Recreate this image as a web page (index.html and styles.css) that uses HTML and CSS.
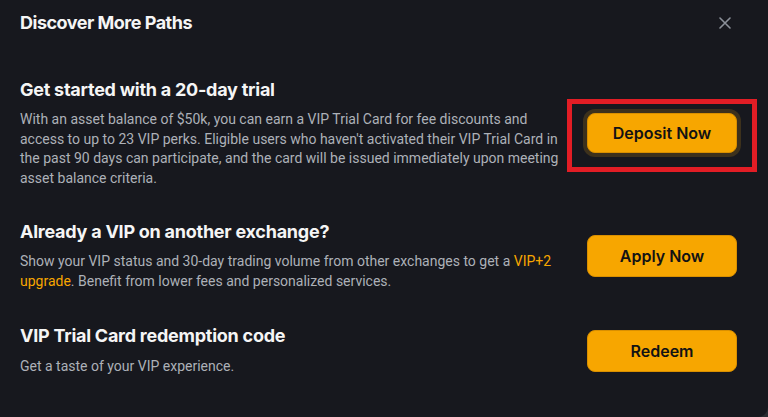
FILE: index.html
```html
<!DOCTYPE html>
<html lang="en">
<head>
<meta charset="utf-8">
<title>Discover More Paths</title>
<link rel="stylesheet" href="styles.css">
</head>
<body>
<div class="dialog">
  <header class="head">
    <h1 class="head-title">Discover More Paths</h1>
    <button class="close" aria-label="Close">
      <svg width="12" height="12" viewBox="0 0 12 12"><path d="M1 1L11 11M11 1L1 11" stroke="#8b9099" stroke-width="1.6" stroke-linecap="round"/></svg>
    </button>
  </header>
  <div class="rows">
    <section class="row">
      <div class="text">
        <h2 class="row-title">Get started with a 20-day trial</h2>
        <p class="row-desc">With an asset balance of $50k, you can earn a VIP Trial Card for fee discounts and access to up to 23 VIP perks. Eligible users who haven't activated their VIP Trial Card in the past 90 days can participate, and the card will be issued immediately upon meeting asset balance criteria.</p>
      </div>
      <div class="action">
        <button class="btn btn-focus">Deposit Now</button>
        <span class="mark"></span>
      </div>
    </section>
    <section class="row">
      <div class="text">
        <h2 class="row-title">Already a VIP on another exchange?</h2>
        <p class="row-desc">Show your VIP status and 30-day trading volume from other exchanges to get a <span class="link">VIP+2</span> <span class="link">upgrade</span>. Benefit from lower fees and personalized services.</p>
      </div>
      <div class="action">
        <button class="btn">Apply Now</button>
      </div>
    </section>
    <section class="row row-last">
      <div class="text">
        <h2 class="row-title">VIP Trial Card redemption code</h2>
        <p class="row-desc">Get a taste of your VIP experience.</p>
      </div>
      <div class="action">
        <button class="btn">Redeem</button>
      </div>
    </section>
  </div>
</div>
</body>
</html>
```

FILE: styles.css
```css
* { box-sizing: border-box; }
html, body { margin: 0; padding: 0; height: 100%; }
body {
  background: #2a2c31;
  font-family: "Roboto", "Liberation Sans", sans-serif;
  color: #adb1b8;
}
.dialog {
  width: 768px;
  height: 417px;
  background: #17181e;
  border-bottom-right-radius: 10px;
  padding: 0 31px 0 20px;
}
.head {
  display: flex;
  align-items: center;
  justify-content: space-between;
  height: 45px;
}
.head-title {
  margin: 0;
  font-family: "Inter", "Roboto", sans-serif;
  font-size: 18px;
  font-weight: 700;
  color: #f5f5f5;
  letter-spacing: -0.5px;
}
.close {
  background: none;
  border: 0;
  padding: 0;
  width: 12px;
  height: 12px;
  margin-right: 6px;
  display: flex;
}
.rows {
  display: flex;
  flex-direction: column;
  gap: 31px;
  padding-top: 33px;
}
.row {
  display: flex;
  align-items: center;
  gap: 20px;
}
.row-last { margin-top: 2px; }
.text { width: 547px; flex: none; }
.row-title {
  margin: 0 0 8px;
  font-family: "Inter", "Roboto", sans-serif;
  font-size: 18px;
  line-height: 24px;
  font-weight: 700;
  color: #f5f5f5;
  letter-spacing: -0.25px;
}
.row-last .row-title { margin-bottom: 9px; }
.row-desc {
  margin: 0;
  font-size: 14px;
  line-height: 19.7px;
  color: #adb1b8;
}
.link { color: #f7a600; }
.action {
  position: relative;
  flex: none;
}
.btn {
  display: block;
  width: 150px;
  height: 42px;
  border: 1px solid #d98f00;
  border-radius: 8px;
  background: #f7a600;
  color: #121214;
  font-family: "Inter", "Roboto", sans-serif;
  font-size: 16px;
  font-weight: 600;
}
.btn-focus {
  height: 40px;
  box-shadow: 0 0 0 4px #3d311c;
}
.mark {
  position: absolute;
  left: -20px;
  top: -14px;
  width: 190px;
  height: 73px;
  border: 5px solid #e21d25;
  pointer-events: none;
}
```
